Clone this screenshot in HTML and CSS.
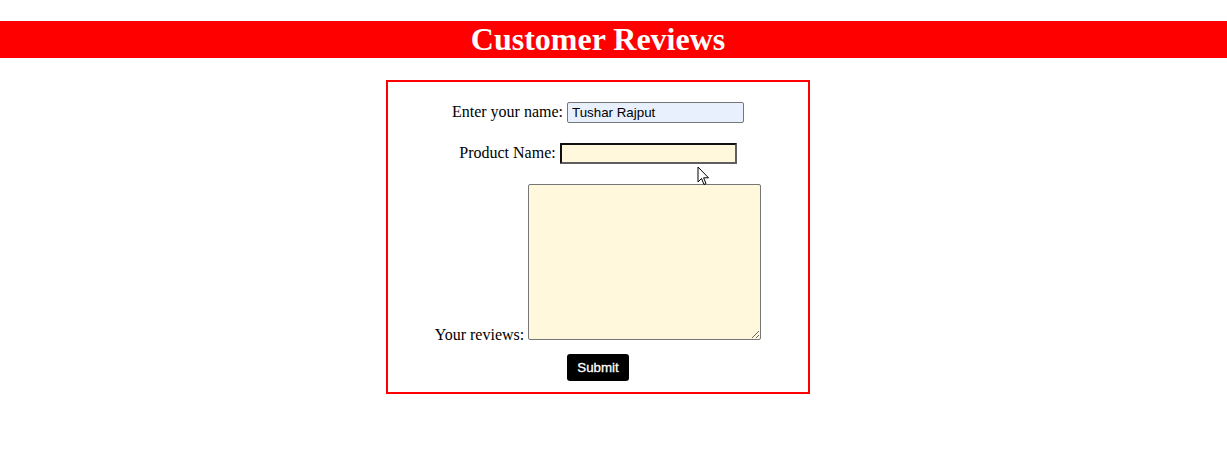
FILE: index.html
```html
<!DOCTYPE html>
<html>
<head>
<meta charset="utf-8">
<link rel="stylesheet" href="styles.css">
</head>
<body>
<h1 class="title">Customer Reviews</h1>
<form class="review-form">
  <div class="row row-name"><label>Enter your name: </label><input class="field field-name" type="text" value="Tushar Rajput"></div>
  <div class="row row-product"><label>Product Name: </label><input class="field field-product" type="text"></div>
  <div class="row row-review"><label>Your reviews: </label><textarea class="review-text"></textarea></div>
  <div class="row row-submit"><button class="submit" type="button">Submit</button></div>
  <svg class="cursor" width="14" height="21" viewBox="0 0 14 21"><path d="M1 1 L1 16 L4.5 12.5 L7 18.5 L9 17.6 L6.6 11.8 L11.5 11.8 Z" fill="#fff" stroke="#000" stroke-width="1" stroke-linejoin="miter"/></svg>
</form>
</body>
</html>
```
FILE: styles.css
```css
body {
  margin: 0;
  font-family: "Liberation Serif", "Times New Roman", serif;
  font-size: 16px;
  color: #000;
  background: #fff;
}
.title {
  margin: 21px 0 22px;
  padding-right: 31px;
  background: #ff0000;
  color: #fff;
  text-align: center;
  font-size: 32px;
  font-weight: bold;
  line-height: 37px;
}
.review-form {
  position: relative;
  box-sizing: border-box;
  width: 424px;
  margin-left: 386px;
  border: 2px solid #ff0000;
  padding: 20px 0 11px;
  text-align: center;
}
.row {
  line-height: 18px;
}
.row-name, .row-product {
  margin-bottom: 20px;
}
.row-review {
  margin-bottom: 10px;
}
.field {
  box-sizing: border-box;
  width: 177px;
  height: 21px;
  margin: 0;
  padding: 1px 4px;
  font-family: "Liberation Sans", Arial, sans-serif;
  font-size: 13.33px;
  border: 1px solid #767676;
  border-radius: 2px;
  vertical-align: baseline;
}
.field-name {
  background: #e8f0fe;
  color: #000;
}
.field-product {
  background: #fff8dc;
  border: 2px solid #101010;
  border-bottom-color: #5f5f5f;
  border-right-color: #5f5f5f;
  border-radius: 1px;
}
.review-text {
  box-sizing: border-box;
  width: 233px;
  height: 156px;
  margin: 0;
  background: #fff8dc;
  border: 1px solid #767676;
  border-radius: 2px;
  font-family: "Liberation Mono", monospace;
  font-size: 13.33px;
  vertical-align: baseline;
}
.submit {
  box-sizing: border-box;
  height: 27px;
  padding: 0 10px;
  background: #000;
  color: #fff;
  border: none;
  border-radius: 3px;
  font-family: "Liberation Sans", Arial, sans-serif;
  font-size: 13.33px;
  -webkit-text-stroke: 0.3px #fff;
}
.cursor {
  position: absolute;
  left: 309px;
  top: 84px;
}
```
